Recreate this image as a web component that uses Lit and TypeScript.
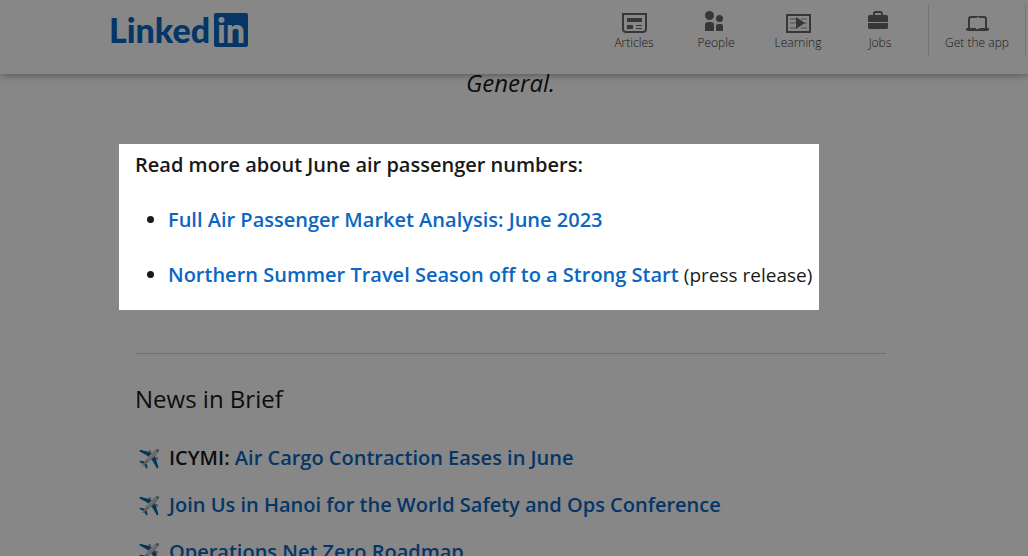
import { LitElement, html, css, svg } from "lit";
import { customElement } from "lit/decorators.js";

const icons = {
  articles: svg`<path fill="none" stroke="currentColor" stroke-width="2" d="M1 3h23v15a3 3 0 0 1-3 3H4a3 3 0 0 1-3-3z"/><path fill="currentColor" d="M5 7h15v4H5zM5 14h6v4H5zM14 14h6v1h-6zM14 17h6v1h-6z"/>`,
  people: svg`<circle cx="5.500" cy="4.500" r="4.500" fill="currentColor"/><circle cx="15.500" cy="7.500" r="3.500" fill="currentColor"/><path fill="currentColor" d="M1 20v-6q0-3 3-3h3q3 0 3 3v6zM12 20v-5q0-2 2-2h3q2 0 2 2v5z"/>`,
  learning: svg`<path fill="none" stroke="currentColor" stroke-width="2" d="M1 4h23v17H1z"/><path fill="currentColor" opacity=".35" d="M4 7h6v2H4zM4 11h6v2H4zM4 16h6v2H4zM15 7h6v2h-6zM18 11h3v2h-3zM15 16h6v2h-6z"/><path fill="currentColor" d="M10 6l9 6-9 6z"/>`,
  jobs: svg`<path fill="none" stroke="currentColor" stroke-width="2" d="M6 5V3q0-2 2-2h4q2 0 2 2v2"/><path fill="currentColor" d="M1.500 4h17Q20 4 20 5.500V11H0V5.500Q0 4 1.500 4zM0 12h20v4.500q0 1.500-1.500 1.500h-17Q0 18 0 16.500z"/>`,
  app: svg`<path fill="none" stroke="currentColor" stroke-width="2" d="M4 18V8q0-2 2-2h13q2 0 2 2v10"/><path fill="currentColor" d="M1 17h23v1q0 2-2 2H3q-2 0-2-2z"/><path fill="#fff" d="M12 6h2v1h-2zM11 17h3v1h-3z"/>`,
};

const navItems = [
  { label: "Articles", icon: icons.articles },
  { label: "People", icon: icons.people },
  { label: "Learning", icon: icons.learning },
  { label: "Jobs", icon: icons.jobs },
];

const briefs = [
  { lead: "ICYMI:", title: "Air Cargo Contraction Eases in June" },
  { lead: "", title: "Join Us in Hanoi for the World Safety and Ops Conference" },
  { lead: "", title: "Operations Net Zero Roadmap" },
];

@customElement("app-root")
export class AppRoot extends LitElement {
  static styles = css`
    :host {
      display: block;
      height: 100vh;
      overflow: hidden;
      background: #fff;
      color: #191919;
      font: 400 20px/28px "Open Sans", "Noto Sans", sans-serif;
    }
    a {
      color: #0a66c2;
      font-weight: 600;
      text-decoration: none;
    }
    header {
      position: relative;
      z-index: 1;
      display: flex;
      justify-content: space-between;
      align-items: flex-start;
      box-sizing: border-box;
      height: 74px;
      padding: 4px 2px 0 110px;
      background: #fff;
      box-shadow: 0 1px 8px rgba(0, 0, 0, 0.4);
    }
    .logo svg {
      display: block;
      overflow: visible;
      fill: #0a66c2;
    }
    .logo text {
      font: 900 34px Lato, sans-serif;
    }
    .logo .in {
      fill: #fff;
    }
    nav {
      display: flex;
    }
    nav a {
      display: flex;
      flex-direction: column;
      align-items: center;
      width: 82px;
      height: 52px;
      padding-top: 7px;
      box-sizing: border-box;
      color: #333;
      font-weight: 300;
      font-size: 12px;
      line-height: 16px;
    }
    nav svg {
      margin-bottom: 2px;
      color: #686868;
    }
    nav .app {
      width: 98px;
      margin-left: 7px;
      border: solid #dedede;
      border-width: 0 1px;
    }
    main {
      max-width: 751px;
      margin: 0 auto;
      padding-right: 7px;
    }
    .caption {
      margin: -7px 0 0;
      font-size: 24px;
      line-height: 32px;
      font-style: italic;
      text-align: center;
    }
    .spotlight {
      position: relative;
      z-index: 2;
      width: fit-content;
      margin: 45px 0 0 -16px;
      padding: 7px 7px 21px 16px;
      background: #fff;
      box-shadow: 0 0 0 200vmax rgba(0, 0, 0, 0.47);
    }
    .spotlight p,
    .spotlight ul {
      margin: 0;
    }
    .spotlight ul {
      padding-left: 33px;
    }
    .spotlight li {
      margin-top: 27px;
    }
    .note {
      font-size: 19px;
    }
    strong {
      font-weight: 600;
    }
    hr {
      margin: 43px 0 0;
      border: 0;
      border-top: 1px solid #d6d6d6;
    }
    h2 {
      margin: 29px 0 0;
      font-size: 24px;
      line-height: 32px;
      font-weight: 400;
    }
    .brief {
      display: flex;
      align-items: baseline;
      margin: 19px 0 0;
    }
    h2 + .brief {
      margin-top: 29px;
    }
    .plane {
      width: 34px;
      padding-left: 3px;
      box-sizing: border-box;
      font-size: 18px;
    }
  `;

  render() {
    return html`
      <header>
        <a class="logo" href="#" aria-label="LinkedIn">
          <svg width="139" height="48" viewBox="0 0 139 48">
            <text x="-1" y="39">Linked</text>
            <rect x="104" y="9" width="34" height="34" rx="2" />
            <text class="in" x="107" y="39">in</text>
          </svg>
        </a>
        <nav>
          ${navItems.map(
            (item) => html`<a href="#">
              <svg width="25" height="22" viewBox="0 0 25 22">${item.icon}</svg>
              <span>${item.label}</span>
            </a>`
          )}
          <a class="app" href="#">
            <svg width="25" height="22" viewBox="0 0 25 22">${icons.app}</svg>
            <span>Get the app</span>
          </a>
        </nav>
      </header>
      <main>
        <p class="caption">General.</p>
        <section class="spotlight">
          <p><strong>Read more about June air passenger numbers:</strong></p>
          <ul>
            <li><a href="#">Full Air Passenger Market Analysis: June 2023</a></li>
            <li>
              <a href="#">Northern Summer Travel Season off to a Strong Start</a>
              <span class="note">(press release)</span>
            </li>
          </ul>
        </section>
        <hr />
        <h2>News in Brief</h2>
        ${briefs.map(
          (b) => html`<p class="brief">
            <span class="plane">✈️</span>
            <span>${b.lead ? html`<strong>${b.lead}</strong> ` : ""}<a href="#">${b.title}</a></span>
          </p>`
        )}
      </main>
    `;
  }
}
